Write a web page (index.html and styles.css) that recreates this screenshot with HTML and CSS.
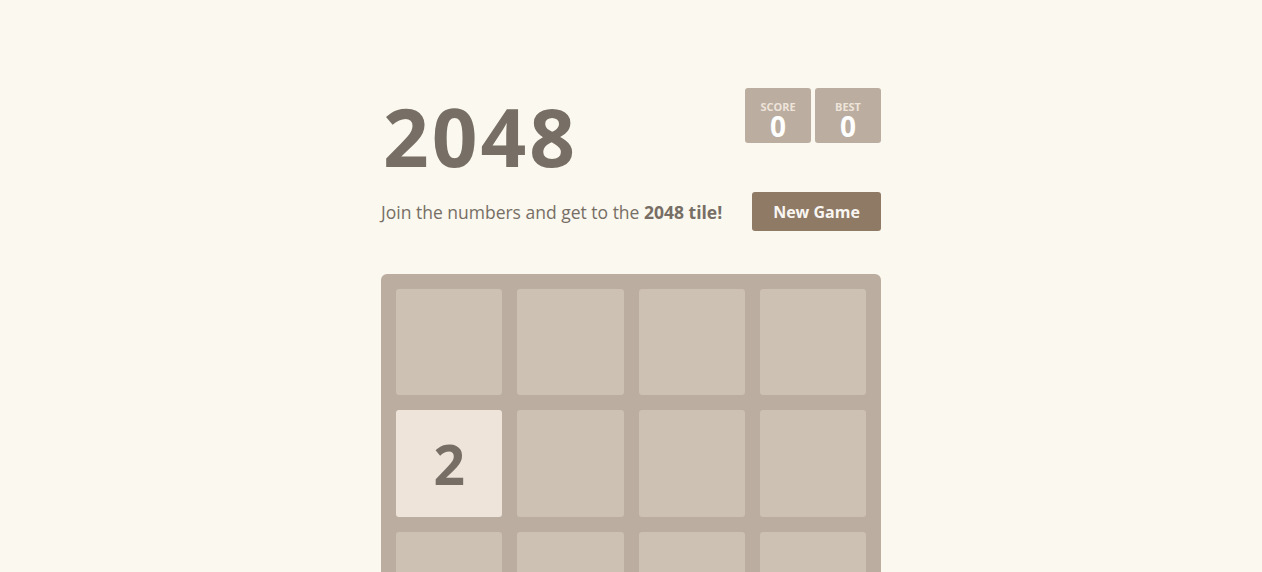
FILE: index.html
```html
<!DOCTYPE html>
<html lang="en">
<head>
  <meta charset="UTF-8">
  <meta name="viewport" content="width=device-width, initial-scale=1.0">
  <title>2048</title>
  <link rel="stylesheet" href="styles.css">
</head>
<body>
  <div class="container">
    <div class="heading">
      <h1 class="title">2048</h1>
      <div class="scores">
        <div class="score-box">
          <span class="score-label">SCORE</span>
          <span class="score-value">0</span>
        </div>
        <div class="score-box">
          <span class="score-label">BEST</span>
          <span class="score-value">0</span>
        </div>
      </div>
    </div>

    <div class="above-game">
      <p class="intro">Join the numbers and get to the <strong>2048 tile!</strong></p>
      <button class="restart-button">New Game</button>
    </div>

    <div class="game-container">
      <div class="grid-cell"></div>
      <div class="grid-cell"></div>
      <div class="grid-cell"></div>
      <div class="grid-cell"></div>
      <div class="grid-cell tile-2">2</div>
      <div class="grid-cell"></div>
      <div class="grid-cell"></div>
      <div class="grid-cell"></div>
      <div class="grid-cell"></div>
      <div class="grid-cell"></div>
      <div class="grid-cell"></div>
      <div class="grid-cell"></div>
      <div class="grid-cell"></div>
      <div class="grid-cell"></div>
      <div class="grid-cell"></div>
      <div class="grid-cell"></div>
    </div>
  </div>
</body>
</html>
```

FILE: styles.css
```css
body {
  margin: 0;
  padding: 88px 0 80px;
  background: #faf8ef;
  color: #776e65;
  font-family: "Open Sans", "Noto Sans", Arial, sans-serif;
  font-size: 17.5px;
}

.container {
  width: 500px;
  margin: 0 auto;
}

/* header: big title on the left, score boxes on the right */
.heading {
  display: flex;
  justify-content: space-between;
  align-items: flex-start;
}

.title {
  margin: 8px 0 0 2px;
  font-size: 80px;
  font-weight: 700;
  line-height: 80px;
  letter-spacing: 3px;
}

.scores {
  display: flex;
  gap: 4px;
}

.score-box {
  width: 66px;
  height: 55px;
  background: #bbada0;
  border-radius: 3px;
  display: flex;
  flex-direction: column;
  align-items: center;
  box-sizing: border-box;
  padding-top: 12px;
}

.score-label {
  font-size: 11px;
  font-weight: 700;
  line-height: 13px;
  color: #eee4da;
}

.score-value {
  font-size: 28px;
  font-weight: 700;
  line-height: 26px;
  color: #fff;
}

.above-game {
  display: flex;
  justify-content: space-between;
  align-items: center;
  margin-top: 16px;
}

.intro {
  margin: 0;
  padding-top: 2px;
  line-height: 37px;
}

.intro strong {
  font-weight: 700;
}

.restart-button {
  width: 129px;
  height: 39px;
  padding-top: 2px;
  background: #8f7a66;
  color: #f9f6f2;
  border: none;
  border-radius: 3px;
  font-family: inherit;
  font-size: 16px;
  font-weight: 700;
  cursor: pointer;
}

/* the board */
.game-container {
  margin-top: 43px;
  width: 500px;
  height: 500px;
  box-sizing: border-box;
  padding: 15px;
  background: #bbada0;
  border-radius: 6px;
  display: grid;
  grid-template-columns: repeat(4, 1fr);
  grid-template-rows: repeat(4, 1fr);
  gap: 15px;
}

.grid-cell {
  background: #cdc1b4;
  border-radius: 3px;
  display: flex;
  align-items: center;
  justify-content: center;
}

.tile-2 {
  background: #eee4da;
  color: #776e65;
  font-size: 55px;
  font-weight: 700;
}
```
